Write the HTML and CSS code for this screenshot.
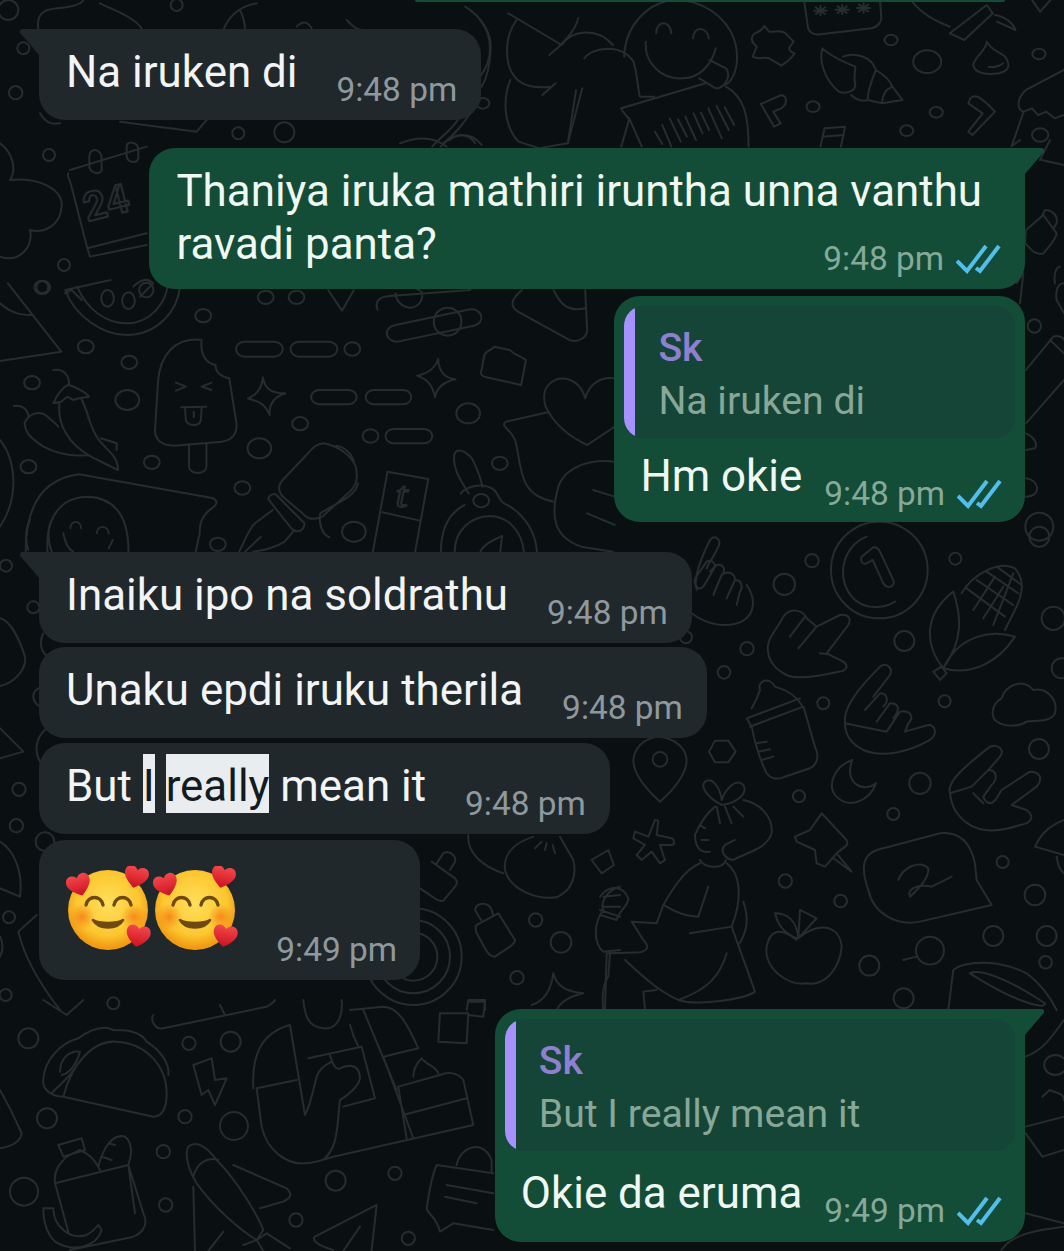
FILE: index.html
```html
<!DOCTYPE html>
<html lang="en">
<head>
<meta charset="UTF-8">
<meta name="viewport" content="width=device-width, initial-scale=1.0">
<title>Chat</title>
<link rel="stylesheet" href="styles.css">
</head>
<body>

<!-- wallpaper doodles, each group is drawn in the coords of one patch of the wallpaper -->
<svg class="doodles" viewBox="0 0 1064 1251" width="1064" height="1251" aria-hidden="true">
  <g transform="scale(.3333)">
    <circle cx="25" cy="30" r="30"/><circle cx="530" cy="15" r="18"/><circle cx="70" cy="145" r="18"/><circle cx="47" cy="278" r="20"/><circle cx="715" cy="400" r="18"/><circle cx="853" cy="397" r="30"/><circle cx="147" cy="465" r="18"/><circle cx="192" cy="795" r="18"/><circle cx="127" cy="862" r="18"/>
    <path d="M115 90C110 50 120 30 170 25C210 20 245 15 250 0M300 10C340 30 400 50 425 85M670 90C690 40 730 15 770 10M720 30C730 50 735 70 735 90M890 80C905 65 920 60 935 85M1040 60C1060 80 1070 90 1090 90"/>
    <path d="M120 340C135 365 150 375 180 370M360 365L590 395L620 360M1440 60C1480 110 1480 180 1440 230M1330 430C1370 400 1390 370 1440 300"/>
    <path d="M0 430C40 460 50 510 30 540C120 530 190 570 185 620C180 680 130 700 90 690C100 740 60 790 0 770"/>
    <path d="M210 510L440 440M205 520C200 530 210 540 212 550L262 745L440 700M270 770L440 735M262 745L270 770"/>
    <path d="M268 470C268 440 305 445 305 475L305 510C300 525 270 520 268 500ZM380 440C380 420 415 425 415 450L415 475C410 490 385 490 380 470Z"/>
    <text class="doodle-text" x="262" y="665" transform="rotate(-14 262 665)">24</text>
    <path d="M195 880L215 870L245 900M400 860C420 840 440 830 460 850C440 870 430 880 420 890"/>
    <path d="M1200 430C1250 410 1300 410 1340 440M1350 420C1370 400 1410 400 1425 430"/>
  </g>
  <g transform="translate(420 0) scale(.4107 .3333)">
    <circle cx="153" cy="310" r="16"/><circle cx="1147" cy="120" r="16"/><circle cx="957" cy="320" r="16"/><circle cx="1257" cy="337" r="16"/><circle cx="1185" cy="392" r="16"/><circle cx="1235" cy="185" r="34"/><circle cx="1507" cy="162" r="16"/><circle cx="1510" cy="405" r="20"/>
    <path d="M110 20C150 50 175 100 172 150C170 200 160 240 150 260M215 40L345 135M385 55C380 90 345 135 315 165M235 60C205 110 205 190 230 230C250 260 280 265 320 260M345 135C370 90 430 80 470 135M298 285L330 250M220 240C200 300 205 380 240 425L290 445L360 430L395 265M400 175C420 140 490 130 520 185C530 230 530 260 535 290L570 290"/>
    <path d="M497 170C500 70 560 5 620 0C700 0 770 70 772 170C772 210 760 250 740 255M575 100C575 60 610 60 612 100M665 115C665 78 700 78 703 115M550 125C545 190 590 240 640 235C680 235 710 195 720 145M680 235L720 265C740 265 760 230 745 205L705 180"/>
    <path d="M490 325L695 250M490 325C495 345 510 350 515 370L540 440M510 355L490 440M745 260C790 290 800 350 800 440"/>
    <path d="M572 395L590 432M590 375L612 440M608 355L635 425M628 358L650 410M646 350L672 420M666 340L688 400M684 338L704 390M702 325L735 415M722 318L752 390M742 322L765 375"/>
    <path d="M838 78L850 95C870 95 880 90 890 100L910 125C900 140 890 150 912 160C905 175 895 185 880 197L850 175C835 170 825 180 810 170L820 140C805 125 805 110 815 100C825 95 835 90 838 78Z"/>
    <path d="M935 0L945 85C950 100 960 105 975 103L1100 85C1115 80 1125 65 1123 50L1120 0M975 18V46M960 32H990M964 22L986 42M986 22L964 42M1028 15V43M1012 29H1044M1017 19L1039 39M1039 19L1017 39M1080 10V38M1064 24H1096M1069 14L1091 34M1091 14L1069 34"/>
    <path d="M980 145C970 180 985 240 1020 275C1040 285 1060 270 1060 255C1055 230 1060 210 1060 200C1040 190 1000 170 980 145ZM1030 170C1060 155 1100 170 1110 210C1130 225 1145 240 1150 260L1175 300L1125 310L1090 300C1080 305 1060 300 1050 285M1110 210C1100 240 1090 270 1090 300M1150 260C1130 270 1125 290 1125 310"/>
    <path d="M830 312L880 285C895 290 895 310 880 325L860 335L878 370L862 380ZM1380 125C1380 150 1350 170 1347 195C1350 220 1380 225 1410 220C1440 210 1435 190 1425 170C1410 155 1390 150 1380 125ZM1385 200C1400 205 1415 195 1420 190"/>
    <path d="M1195 0C1220 40 1250 60 1290 80M1290 100L1380 15L1395 40L1325 120ZM1400 45C1425 50 1445 70 1450 90L1405 65M1340 295C1350 280 1365 290 1400 335L1345 405L1335 395L1370 340L1335 310Z"/>
    <path d="M1568 210L1475 270C1450 300 1455 330 1470 335L1440 440M1470 335L1490 325L1505 345L1525 335L1545 355L1568 345M975 440L985 385L1035 380L1025 440M980 410L1032 405M30 440C50 410 80 390 100 345M50 440C80 400 120 390 150 435M380 270L360 430"/>
    <path d="M1490 0L1510 35L1535 0"/>
  </g>
  <g transform="translate(0 280) scale(.3954 .3333)">
    <circle cx="107" cy="22" r="20"/><circle cx="514" cy="107" r="20"/><circle cx="217" cy="200" r="20"/><circle cx="327" cy="247" r="20"/><circle cx="81" cy="308" r="20"/><circle cx="322" cy="360" r="30"/><circle cx="72" cy="560" r="20"/><circle cx="384" cy="547" r="20"/><circle cx="672" cy="52" r="20"/><circle cx="750" cy="52" r="20"/><circle cx="891" cy="207" r="20"/><circle cx="759" cy="431" r="20"/><circle cx="656" cy="505" r="30"/><circle cx="937" cy="468" r="20"/><circle cx="613" cy="624" r="20"/><circle cx="895" cy="755" r="30"/><circle cx="1184" cy="400" r="30"/><circle cx="1264" cy="550" r="20"/><circle cx="551" cy="793" r="20"/>
    <path d="M20 10L155 215L0 243M0 70C30 100 50 105 80 105M0 480C40 540 50 650 0 740"/>
    <path d="M165 30C190 110 260 165 320 165C400 165 450 90 455 20M195 20C220 90 270 130 320 130C380 130 420 70 425 10M165 30L280 0"/>
    <ellipse cx="272" cy="55" rx="16" ry="25"/><ellipse cx="325" cy="62" rx="16" ry="25"/><ellipse cx="370" cy="30" rx="18" ry="22"/>
    <rect x="597" y="185" width="118" height="45" rx="22"/><rect x="735" y="185" width="118" height="45" rx="22"/><rect x="787" y="330" width="115" height="43" rx="21"/><rect x="925" y="330" width="115" height="43" rx="21"/><rect x="975" y="447" width="118" height="43" rx="21"/>
    <rect x="975" y="112" width="245" height="50" rx="25" transform="rotate(-14 1095 135)"/><ellipse cx="1132" cy="125" rx="35" ry="42"/>
    <path d="M955 90C945 60 965 50 985 48L1190 30M1000 40C1005 90 1060 100 1068 50C1068 30 1060 30 1055 28M830 30L865 92L895 30"/>
    <path d="M510 180C440 170 405 230 400 300L392 450C392 480 410 497 440 497L560 485C590 480 600 460 598 430L580 295C560 290 545 280 545 255C525 250 505 230 510 180ZM478 495L478 560C480 585 520 585 522 560L522 490M445 308L470 320L445 332M535 308L510 320L535 330M458 382L522 380M468 385L470 420C475 440 505 440 508 420L510 382M490 395L490 412"/>
    <path d="M665 292C670 330 690 340 722 340C695 350 680 370 682 405C670 370 655 365 627 355C650 345 662 325 665 292ZM1108 237C1110 275 1125 295 1152 298C1125 305 1105 320 1100 352C1095 320 1085 300 1055 287C1085 280 1100 265 1108 237Z"/>
    <path d="M135 270C160 265 175 285 175 315M135 370C145 340 165 315 175 315C190 320 220 340 225 350L200 355L185 360L170 350L155 365ZM150 370C145 430 170 490 230 530L298 570C300 530 270 510 250 480C225 440 225 400 205 355M35 378C55 375 70 385 72 410M62 430C70 405 95 390 115 405C130 420 140 430 148 440M62 430C65 465 85 480 110 500C150 525 190 530 225 525M255 475L295 490L295 510"/>
    <path d="M1250 200L1290 210C1300 225 1320 230 1330 240L1318 315L1225 290C1215 285 1215 280 1218 270L1225 225C1230 210 1240 215 1250 200Z"/>
    <path d="M1320 30C1290 60 1290 80 1310 95L1440 180C1465 190 1485 170 1485 150L1480 30M1400 30C1420 80 1440 95 1480 85"/>
    <path d="M1480 355C1470 310 1440 290 1410 297C1380 310 1370 340 1380 380C1400 430 1440 470 1485 495L1555 440M1480 355C1490 310 1520 290 1555 295M1385 397L1280 425C1270 430 1275 440 1285 450C1310 480 1305 500 1310 520C1320 600 1330 650 1400 665"/>
    <path d="M820 490C800 490 790 505 775 525L715 600C700 620 705 640 720 655L765 700C780 720 795 720 815 710L880 640C905 615 905 590 900 560C890 530 860 500 820 490ZM850 497C870 500 890 520 895 545M680 660C675 650 690 640 697 643L770 730C770 750 755 760 740 750ZM690 690L645 730C630 745 620 780 605 815M745 750L720 785C700 800 680 810 640 815M660 770L620 815M905 610C900 650 850 670 810 700C805 730 815 765 833 772"/>
    <path d="M980 575L1083 597L1050 815M980 575L943 815M967 697L1062 722"/>
    <text class="doodle-text doodle-t" x="1000" y="682">t</text>
    <path d="M1150 520C1160 500 1190 520 1200 550C1215 590 1220 620 1220 620M1150 520C1140 560 1170 610 1185 640M1165 640C1180 620 1220 605 1250 630C1265 650 1260 665 1290 680C1330 710 1355 760 1358 815M1115 815C1115 750 1135 700 1175 675M1150 815C1150 750 1190 710 1240 708C1290 710 1320 760 1325 815M1215 815C1225 790 1250 780 1270 768L1265 815"/>
    <circle cx="1217" cy="662" r="20"/>
    <path d="M1555 545C1480 535 1420 570 1410 630C1395 700 1395 770 1470 800L1550 815M1500 630L1555 650M1485 700L1555 735"/>
    <path d="M65 815C65 720 85 600 200 583L540 655C555 665 545 680 530 690C510 710 505 730 505 760L495 815M120 815C115 700 160 650 225 650C290 655 325 710 325 815M178 745C178 720 205 720 205 745M245 760C245 735 272 735 275 760M160 760C165 790 175 810 185 815M275 805L285 780"/>
  </g>
  <g transform="translate(600 530) scale(.3333)">
    <circle cx="636" cy="92" r="20"/><circle cx="553" cy="163" r="32"/><circle cx="1066" cy="86" r="18"/><circle cx="441" cy="356" r="20"/><circle cx="913" cy="333" r="30"/><circle cx="372" cy="427" r="19"/><circle cx="670" cy="520" r="18"/><circle cx="1034" cy="514" r="18"/><circle cx="1317" cy="657" r="30"/><circle cx="960" cy="760" r="32"/><circle cx="597" cy="799" r="18"/><circle cx="880" cy="852" r="18"/><circle cx="1208" cy="996" r="18"/><circle cx="556" cy="1053" r="20"/><circle cx="722" cy="1113" r="19"/><circle cx="1305" cy="1095" r="31"/><circle cx="1180" cy="1218" r="30"/><circle cx="1340" cy="1218" r="30"/><circle cx="1337" cy="1297" r="19"/><circle cx="808" cy="1307" r="30"/><circle cx="911" cy="1405" r="30"/><circle cx="1318" cy="20" r="30"/><circle cx="1360" cy="265" r="35"/><circle cx="258" cy="322" r="18"/><circle cx="1385" cy="415" r="30"/>
    <path d="M290 180C280 150 300 90 330 30C345 10 365 30 355 50C340 85 325 100 320 115M285 145L320 95C340 85 350 105 340 120L310 170C295 185 280 165 285 145ZM330 125L350 105C370 100 380 120 365 135L340 195M365 135C385 120 405 130 405 150L380 205M405 150C425 150 430 170 420 185L410 225M440 165C465 200 470 250 425 275C380 295 320 285 275 250"/>
    <circle cx="838" cy="120" r="145"/>
    <path d="M800 20C720 50 700 170 780 220C820 240 860 230 885 215M785 80L820 52C830 50 835 55 840 65L882 155C880 175 860 175 850 160L818 90L800 100C785 105 780 90 785 80Z"/>
    <path d="M1085 190C1120 130 1200 90 1245 115C1275 150 1270 190 1245 240L1215 300M1100 175L1215 260M1130 150L1240 225M1160 125L1255 190M1190 110L1265 165M1120 240L1185 140M1150 265L1210 170M1180 285L1240 130M1030 415C970 340 975 250 1060 185C1085 260 1090 330 1030 415ZM1030 415C1080 310 1180 300 1245 320C1200 390 1120 440 1030 415M1000 425L1025 410L1040 430L1020 450Z"/>
    <path d="M1200 580C1170 570 1170 525 1205 505C1215 470 1265 440 1300 480C1340 470 1375 510 1365 550C1350 580 1300 570 1280 575C1260 590 1220 590 1200 580Z"/>
    <path d="M505 370C495 330 530 300 550 260C570 230 610 240 620 265L650 290L720 255C745 250 755 265 745 285L680 370L730 395C750 410 735 425 715 425C650 440 590 450 560 435C530 420 510 400 505 370ZM570 320L615 260M595 355L650 290M660 370L680 372"/>
    <path d="M735 580C730 540 760 490 840 410C860 395 880 415 870 435L820 500M795 540L840 490C860 490 870 510 850 530M830 575L870 520C900 520 900 540 880 565M860 605L900 545C930 540 945 560 925 580L915 605L985 585C1005 585 1015 610 990 630C930 665 850 685 790 660C760 645 735 620 735 580Z"/>
    <path d="M1050 790C1040 760 1080 720 1170 650C1195 640 1215 660 1200 680L1165 720M1115 770L1165 720C1190 720 1195 745 1175 765L1150 800C1160 825 1175 825 1190 805L1205 780L1290 725C1320 725 1330 745 1310 770L1235 825L1280 840C1305 860 1295 880 1260 885C1200 905 1150 910 1110 885C1070 860 1055 830 1050 790ZM1120 790L1150 820"/>
    <path d="M440 565L600 505M450 590L610 530M480 480C470 450 510 440 525 470C560 480 590 500 605 525M455 535C470 510 475 495 480 480M455 590C465 640 480 690 500 730C510 745 530 750 550 742L630 715C650 705 660 680 645 650C630 600 620 560 610 530M470 640L500 635M475 665L510 658M485 690L520 680M440 565L455 590"/>
    <path d="M757 690C700 710 680 770 710 800C750 840 810 810 828 760C790 790 730 760 757 690Z"/>
    <path d="M180 815C130 770 100 730 100 690C105 640 150 620 180 620C220 625 260 650 260 695C255 740 220 780 180 815Z"/>
    <circle cx="180" cy="688" r="22"/>
    <path d="M345 632H385L407 665L385 697H345L327 665ZM165 870L175 872L170 915L215 925C225 930 225 945 215 945L180 945L195 990L180 1000L155 965L125 990L110 975L135 945L100 925L105 905L145 920Z"/>
    <path d="M665 850L735 925C745 935 745 945 735 950L710 970L675 1010L650 1000L645 960L590 935L585 920L630 900ZM710 970L755 1025L700 985"/>
    <path d="M830 960L1020 910C1070 905 1110 930 1125 1000L1130 1050L1175 1125L960 1175C890 1190 820 1150 805 1080C780 1010 790 975 830 960ZM895 1050C910 1010 960 990 985 1015C990 1050 930 1100 930 1100C920 1080 950 1060 995 1070L1055 1040"/>
    <path d="M590 1230C540 1190 510 1200 500 1250C490 1310 560 1370 620 1360C680 1370 720 1310 725 1250C720 1190 660 1170 595 1225M590 1225C540 1205 530 1170 525 1150C560 1150 590 1170 595 1225L600 1140L650 1165L595 1225"/>
    <circle cx="990" cy="1262" r="42"/>
    <path d="M950 1280L910 1290M1045 1440L1060 1320C1100 1290 1200 1290 1280 1330C1320 1360 1350 1400 1370 1440M1110 1330C1150 1310 1260 1370 1335 1420C1340 1440 1250 1420 1110 1330M1392 870C1340 890 1320 920 1305 950L1392 975M1370 980C1375 1010 1380 1020 1392 1030"/>
    <path d="M365 825C320 800 300 770 315 755C335 740 360 770 365 810C380 770 410 745 430 765C445 790 410 820 365 825ZM350 830L360 880M375 830L395 880M400 830L430 860M345 830C320 850 300 880 285 915C285 950 300 970 330 965M430 810C480 820 520 860 515 910C500 960 430 970 400 990C370 985 360 960 375 945L405 930M305 930H325M300 885L315 895M300 990C310 1015 370 1020 378 990"/>
    <path d="M300 1000C250 1020 210 1090 190 1125C230 1150 260 1160 295 1160L325 1070M380 1000C420 1030 430 1100 395 1190L465 1385C440 1405 300 1430 235 1410C170 1380 130 1340 75 1290M270 1210L395 1190M190 1125L170 1180L95 1175L130 1230C150 1250 145 1265 110 1268L20 1270L15 1440M380 1270C360 1340 320 1380 235 1410M135 1440L130 1385L170 1380M430 1115C450 1170 440 1210 415 1245M0 1100C30 1060 70 1070 85 1105C85 1130 60 1135 50 1170L0 1155M10 1130H60"/>
  </g>
  <g transform="translate(0 1000) scale(.3333)">
    <circle cx="85" cy="115" r="30"/><circle cx="141" cy="355" r="30"/><circle cx="567" cy="130" r="20"/><circle cx="692" cy="125" r="30"/><circle cx="555" cy="350" r="20"/><circle cx="702" cy="378" r="42"/><circle cx="490" cy="455" r="20"/><circle cx="72" cy="575" r="42"/><circle cx="497" cy="615" r="20"/><circle cx="888" cy="660" r="20"/><circle cx="1007" cy="542" r="30"/><circle cx="1185" cy="520" r="20"/><circle cx="1225" cy="715" r="20"/><circle cx="340" cy="10" r="18"/>
    <path d="M190 290L460 350C490 350 500 320 500 280C500 200 440 130 350 125C280 120 215 190 190 290ZM190 290C150 290 125 265 130 235C135 180 180 130 235 115C270 90 310 75 340 90C370 90 420 90 440 125C480 150 510 190 505 225M155 280C170 260 205 240 235 190M180 215C180 180 205 150 240 155C230 190 210 220 185 225"/>
    <path d="M580 195L635 175L645 240L680 235L645 315L625 270L605 285Z"/>
    <path d="M760 265C755 170 780 100 870 75M870 75L915 345C930 320 940 270 950 230C960 200 985 190 995 185M910 0C915 50 925 80 970 85C1010 90 1030 50 1025 0M1050 30L1150 20C1200 20 1230 90 1255 145L1150 170L1240 415M1090 30L1190 270M770 265L890 240M770 265L785 380C800 450 860 495 915 490C950 490 975 475 1000 470L1420 375L1390 240C1370 215 1340 215 1320 225L1195 260L1220 415M1210 345L1400 295M1240 230C1240 200 1260 180 1265 175C1280 195 1310 200 1315 220M925 175L1085 140L1125 295L1030 320M990 165C1000 200 1010 210 1020 205C1050 190 1080 195 1080 235C1075 260 1040 290 1020 300L1015 350C1010 420 1000 450 975 475M1050 75C1060 110 1075 140 1075 140"/>
    <path d="M460 45C450 60 465 90 490 85L800 20C820 10 825 0 825 0M660 15L675 45M1320 40L1405 40L1400 130L1315 125ZM1405 5L1455 5L1450 50L1405 45M0 270C40 340 60 390 65 400C60 430 30 440 0 445M130 0L200 45L250 0"/>
    <path d="M165 550L385 495L430 640C450 680 420 710 380 715L210 750M165 550C160 510 180 490 200 470L240 450C260 460 280 470 300 510M175 435L245 415L255 450L190 470ZM165 550L205 695M295 500C310 440 340 400 375 410C400 430 395 470 385 495M325 430L345 435M305 470L335 480M385 495L405 640M130 625L160 625C160 680 210 720 260 705C280 695 290 680 295 675L305 690C290 740 220 760 165 725C140 700 130 665 130 625Z"/>
    <path d="M565 440C590 420 620 440 650 480C710 540 770 640 790 690L770 720C720 690 640 620 590 550C560 500 555 460 565 440ZM580 530C590 490 620 470 655 480M700 495L860 565C880 585 870 595 850 605L780 625M580 560L585 753M625 753L670 695M770 720L800 700L870 745M730 735L770 720L790 753"/>
    <path d="M1130 615L945 710C935 720 950 735 1000 750M1130 615L1115 753M1080 680L1030 753M1310 495L1480 520M1310 495C1290 540 1285 600 1280 625C1285 645 1310 650 1320 695L1360 670L1480 690M1370 495C1380 440 1450 415 1475 480L1475 520M1340 555L1480 580M1335 590L1430 610"/>
  </g>
  <g transform="translate(400 810) scale(.3333)">
    <circle cx="407" cy="330" r="20"/><circle cx="483" cy="397" r="31"/><circle cx="351" cy="503" r="20"/><circle cx="40" cy="440" r="145"/><circle cx="40" cy="440" r="110"/><circle cx="40" cy="440" r="72"/>
    <path d="M205 75C200 130 250 170 310 190M400 80C340 100 310 130 315 180C330 240 410 270 470 262C520 240 530 190 520 150L480 80M405 115L425 95M435 120L440 100M465 130L458 105M95 155L165 205C175 215 170 225 165 230L130 272C120 275 110 270 100 262L60 235M110 160L130 130C145 120 170 135 165 155L150 180M230 345L295 310L345 390C345 400 340 400 330 410L285 440C270 440 265 430 255 415L230 370C225 355 225 350 230 345ZM243 330L225 300C230 275 265 275 275 300L280 318M575 150L625 120L642 165L605 190ZM460 490C470 530 500 545 550 550C505 560 480 580 470 600M395 585C440 570 455 530 460 490M200 600L205 570L255 570L255 600M660 230C620 240 600 280 610 300C580 340 580 400 610 425L660 420M630 430L625 500C610 520 605 560 610 600M610 260L660 255M600 300L660 320"/>
  </g>
  <g transform="translate(0 520) scale(.3333)">
    <circle cx="18" cy="137" r="18"/><circle cx="100" cy="262" r="18"/><circle cx="57" cy="808" r="20"/><circle cx="49" cy="917" r="20"/><circle cx="135" cy="965" r="28"/><circle cx="27" cy="1192" r="18"/><circle cx="17" cy="1425" r="18"/>
    <path d="M90 0C75 30 75 60 85 90M155 0C140 30 145 70 155 95M0 295C30 300 60 360 75 410C80 450 40 490 0 498M130 340C115 370 125 400 145 410M115 505C90 520 100 550 120 560M0 625L70 695L0 715M140 625C110 650 100 690 120 725M0 965C40 990 70 1050 60 1130L0 1105M110 1185L55 1235C70 1300 110 1380 180 1470M0 1250C15 1280 5 1300 0 1310"/>
  </g>
  <g transform="translate(1000 140) scale(.3333)">
    <circle cx="103" cy="558" r="20"/><circle cx="118" cy="1160" r="42"/>
    <path d="M78 270L130 225L170 280C170 290 160 300 155 310L130 340C120 345 110 340 100 335L75 310ZM125 230L135 210C155 210 175 225 170 250L160 265M78 690L160 590C170 585 190 590 192 600M150 600L192 640M78 850L192 720M78 880C100 890 115 910 105 925L78 930M78 1015C120 1020 125 1070 78 1070M165 430C160 400 170 380 180 380M192 430C175 430 165 450 170 480L192 520M40 15L60 0M125 60L192 75M150 0L120 60M50 430L70 400L60 490"/>
  </g>
  <g transform="translate(480 1000) scale(.3724 .3333)">
    <circle cx="1545" cy="195" r="30"/>
    <path d="M1465 170C1510 150 1530 120 1568 60M1510 290L1530 270C1550 280 1568 280 1568 300M1465 380L1568 350M1465 400L1510 470L1568 450M1400 750C1430 700 1500 690 1568 680M1465 640L1568 670"/>
  </g>
</svg>

<!-- one emoji, used twice -->
<svg class="defs" width="0" height="0" aria-hidden="true">
  <defs>
    <radialGradient id="face" cx="50%" cy="42%" r="55%">
      <stop offset="0" stop-color="#ffdf5c"/>
      <stop offset=".72" stop-color="#fcc72f"/>
      <stop offset="1" stop-color="#f19a14"/>
    </radialGradient>
    <radialGradient id="blush">
      <stop offset="0" stop-color="#f57f17" stop-opacity=".85"/>
      <stop offset="1" stop-color="#f57f17" stop-opacity="0"/>
    </radialGradient>
    <linearGradient id="heart" x1="0" y1="0" x2="0" y2="1">
      <stop offset="0" stop-color="#f5474c"/>
      <stop offset="1" stop-color="#c9121f"/>
    </linearGradient>
    <path id="heart-shape" d="M0 -7C-3 -12 -11 -12 -12 -5C-13 1 -6 7 0 11C6 7 13 1 12 -5C11 -12 3 -12 0 -7Z" fill="url(#heart)"/>
    <symbol id="smile-hearts" viewBox="0 0 85 85">
      <circle cx="42" cy="44" r="40" fill="url(#face)"/>
      <circle cx="16" cy="51" r="13" fill="url(#blush)"/>
      <circle cx="68" cy="51" r="13" fill="url(#blush)"/>
      <path d="M20 39C22 29 35 29 37 39M48 39C50 29 63 29 65 39" fill="none" stroke="#6e4a12" stroke-width="3.4" stroke-linecap="round"/>
      <path d="M27 54C33 64 51 64 57 54C51 58 33 58 27 54Z" fill="#6e4a12" stroke="#6e4a12" stroke-width="2.6" stroke-linejoin="round"/>
      <use href="#heart-shape" transform="translate(13 19) rotate(-18)"/>
      <use href="#heart-shape" transform="translate(70 11) rotate(14)"/>
      <use href="#heart-shape" transform="translate(72 70) rotate(10)"/>
    </symbol>
    <symbol id="read-ticks" viewBox="0 0 45 30">
      <path d="M1 17L11 27L30 2M20 24L24 27L43 2" fill="none" stroke="#53bdeb" stroke-width="4"/>
    </symbol>
  </defs>
</svg>

<div class="chat">
  <div class="msg-edge"></div>

  <div class="msg in tail first">
    <div class="line">
      <span class="text">Na iruken di</span>
      <span class="time">9:48 pm</span>
    </div>
  </div>

  <div class="msg out tail long">
    <div class="text">Thaniya iruka mathiri iruntha unna vanthu<br>ravadi panta?</div>
    <div class="meta">
      <span class="time">9:48 pm</span>
      <svg class="ticks"><use href="#read-ticks"/></svg>
    </div>
  </div>

  <div class="msg out reply">
    <div class="quote">
      <div class="quote-bar"></div>
      <div class="quote-body">
        <div class="quote-name">Sk</div>
        <div class="quote-text">Na iruken di</div>
      </div>
    </div>
    <div class="line">
      <span class="text">Hm okie</span>
      <span class="meta">
        <span class="time">9:48 pm</span>
        <svg class="ticks"><use href="#read-ticks"/></svg>
      </span>
    </div>
  </div>

  <div class="msg in tail group-start">
    <div class="line">
      <span class="text">Inaiku ipo na soldrathu</span>
      <span class="time">9:48 pm</span>
    </div>
  </div>

  <div class="msg in group-second">
    <div class="line">
      <span class="text">Unaku epdi iruku therila</span>
      <span class="time">9:48 pm</span>
    </div>
  </div>

  <div class="msg in next">
    <div class="line">
      <span class="text">But <span class="sel">I</span> <span class="sel">really</span> mean it</span>
      <span class="time">9:48 pm</span>
    </div>
  </div>

  <div class="msg in emoji-msg">
    <div class="emojis">
      <svg class="emoji"><use href="#smile-hearts"/></svg>
      <svg class="emoji"><use href="#smile-hearts"/></svg>
    </div>
    <span class="time">9:49 pm</span>
  </div>

  <div class="msg out tail reply last">
    <div class="quote">
      <div class="quote-bar"></div>
      <div class="quote-body">
        <div class="quote-name">Sk</div>
        <div class="quote-text">But I really mean it</div>
      </div>
    </div>
    <div class="line">
      <span class="text">Okie da eruma</span>
      <span class="meta">
        <span class="time">9:49 pm</span>
        <svg class="ticks"><use href="#read-ticks"/></svg>
      </span>
    </div>
  </div>
</div>

</body>
</html>
```

FILE: styles.css
```css
* {
  padding: 0;
  margin: 0;
  box-sizing: border-box;
  font-family: "Roboto", "Liberation Sans", sans-serif;
}

body {
  position: relative;
  width: 1064px;
  height: 1251px;
  overflow: hidden;
  background-color: #0a1012;
}

.doodles {
  position: absolute;
  top: 0;
  left: 0;
}

.doodles * {
  fill: none;
  stroke: #272c2e;
  stroke-width: 2px;
  stroke-linecap: round;
  stroke-linejoin: round;
  vector-effect: non-scaling-stroke;
}

.doodles .doodle-text {
  font-family: "Roboto", sans-serif;
  font-size: 120px;
  font-weight: 700;
}

.doodles .doodle-t {
  font-family: "Liberation Serif", serif;
  font-size: 110px;
  font-weight: 400;
  font-style: italic;
}

.defs {
  position: absolute;
}

.chat {
  position: relative;
  display: flex;
  flex-direction: column;
  padding: 0 39px;
}

.msg-edge {
  height: 2px;
  width: 590px;
  margin-left: 376px;
  background-color: #134d37;
  border-radius: 0 0 10px 10px;
}

.msg {
  position: relative;
  padding: 17px 24px 10px 27px;
  border-radius: 26px;
  font-size: 43.9px;
  line-height: 53px;
}

.in {
  align-self: flex-start;
  background-color: #20282c;
  color: #f2f4f5;
}

.out {
  align-self: flex-end;
  background-color: #134d37;
  color: #f0f8f4;
}

.first { margin-top: 27px; }
.long { margin-top: 28px; }
.reply { margin-top: 7px; }
.group-start { margin-top: 30px; }
.group-second { margin-top: 4px; }
.next { margin-top: 5px; }
.last { margin-top: 29px; }

.in.tail { border-top-left-radius: 0; }
.out.tail { border-top-right-radius: 0; }

.tail::before {
  content: "";
  position: absolute;
  top: 0;
  width: 20px;
  height: 27px;
  background-color: inherit;
}

.in.tail::before {
  left: -19px;
  clip-path: polygon(8% 0, 100% 0, 100% 100%, 0 14%, 0 5%);
}

.out.tail::before {
  right: -19px;
  clip-path: polygon(0 0, 92% 0, 100% 5%, 100% 14%, 0 100%);
}

.line {
  display: flex;
  align-items: flex-start;
  gap: 39px;
}

.line .text {
  margin-bottom: 11px;
}

.time {
  font-size: 33.4px;
  line-height: 40px;
  white-space: nowrap;
}

.line .time,
.line .meta {
  align-self: flex-end;
}

.in .time { color: #8f999d; }
.out .time { color: #86a99a; }

.meta {
  display: flex;
  align-items: center;
  gap: 12px;
}

.ticks {
  width: 45px;
  height: 30px;
}

/* two line message, time sits under the end of the text */
.long .text {
  margin: 0 19px -32px 0;
}

.long .meta {
  justify-content: flex-end;
}

.sel {
  padding: 6px 0 1px;
  background-color: #e9edef;
  color: #111b21;
}

.emoji-msg {
  display: flex;
  justify-content: space-between;
  align-items: flex-end;
  width: 381px;
  height: 140px;
  margin-top: 6px;
  padding-top: 26px;
  padding-right: 23px;
}

.emojis {
  display: flex;
  gap: 2px;
  align-self: flex-start;
}

.emoji {
  width: 85px;
  height: 85px;
}

.reply {
  padding: 10px 10px 8px;
}

.quote {
  display: flex;
  height: 132px;
  overflow: hidden;
  border-radius: 20px;
  background-color: #154536;
}

.quote-bar {
  width: 11px;
  background-color: #a791ff;
}

.quote-body {
  padding: 16px 0 0 23px;
  font-size: 39.2px;
  line-height: 53px;
}

.quote-name {
  color: #8f7fd1;
  font-weight: 500;
}

.quote-text {
  color: #88a799;
}

.reply .line {
  gap: 22px;
  margin: 12px 13px 0 16px;
}

.reply .line .text {
  margin-bottom: 11px;
}

.last {
  padding-bottom: 11px;
}

.last .line {
  margin-top: 16px;
}
```
